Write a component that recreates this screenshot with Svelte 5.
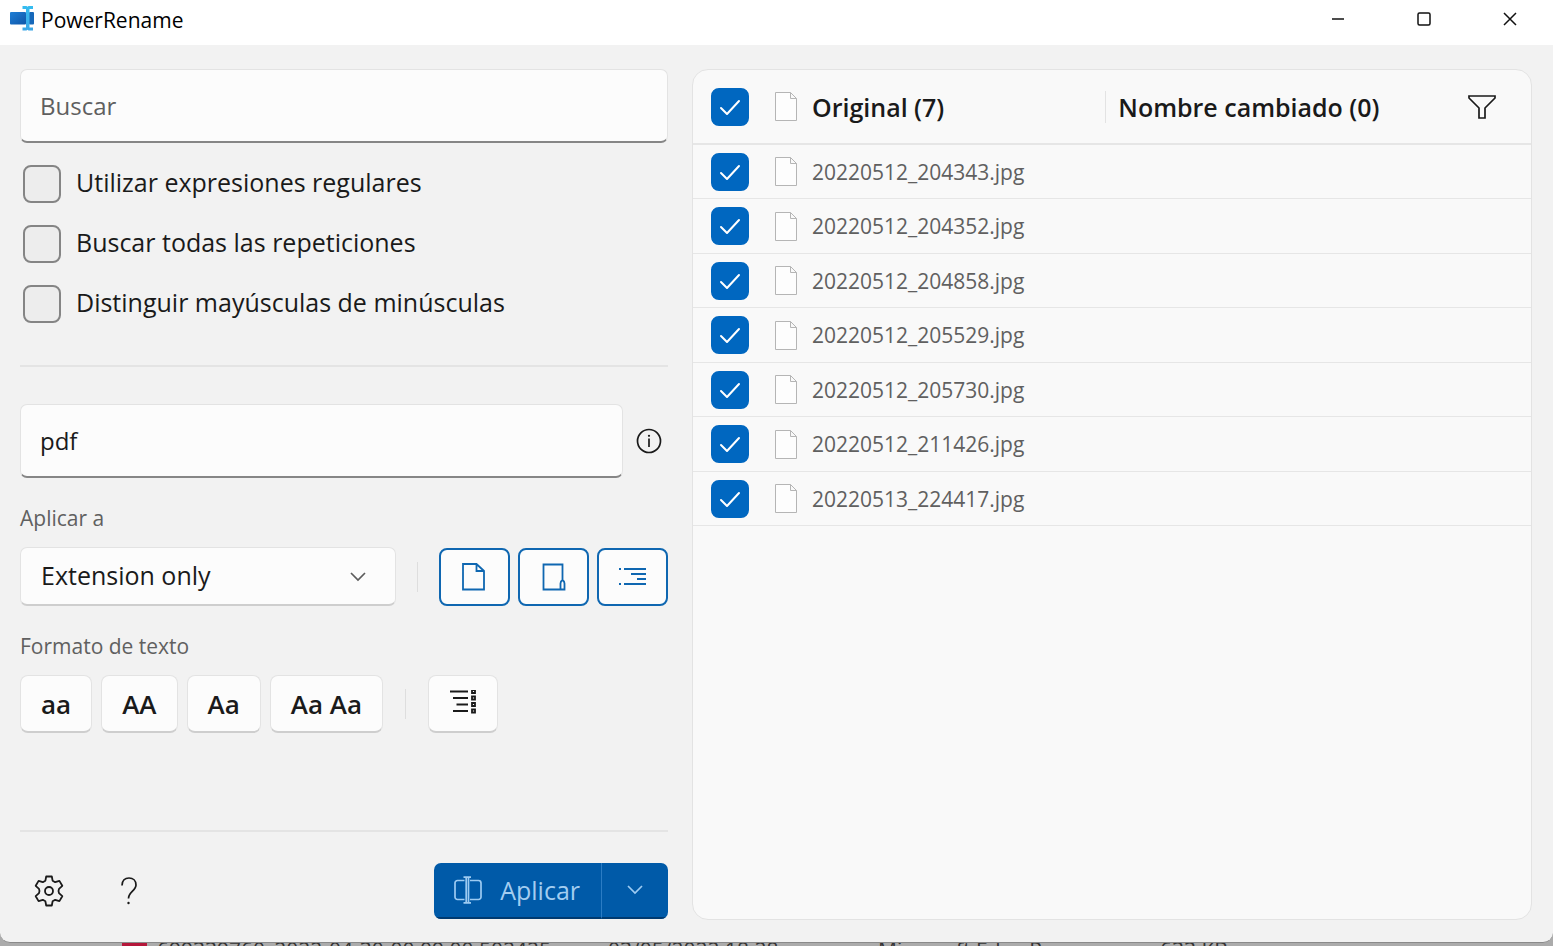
<script>
    let search = '';
    let replace = 'pdf';
    let applyTo = 'ext';

    let options = [
        { id: 'regex', label: 'Utilizar expresiones regulares', checked: false },
        { id: 'all', label: 'Buscar todas las repeticiones', checked: false },
        { id: 'case', label: 'Distinguir mayúsculas de minúsculas', checked: false }
    ];

    let include = { files: true, folders: true, subfolders: true };

    let files = [
        '20220512_204343.jpg',
        '20220512_204352.jpg',
        '20220512_204858.jpg',
        '20220512_205529.jpg',
        '20220512_205730.jpg',
        '20220512_211426.jpg',
        '20220513_224417.jpg'
    ].map((name) => ({ name, checked: true }));

    $: allChecked = files.every((f) => f.checked);

    function toggleAll(e) {
        const checked = e.target.checked;
        files = files.map((f) => ({ ...f, checked }));
    }
</script>

<div class="window">
    <header>
        <svg class="logo" width="26" height="26" viewBox="0 0 26 26">
            <defs>
                <linearGradient id="box" x1="0" y1="0" x2="1" y2="1">
                    <stop offset="0" stop-color="#1f7fd6" />
                    <stop offset="1" stop-color="#0f56a8" />
                </linearGradient>
                <linearGradient id="beam" x1="0" y1="0" x2="0" y2="1">
                    <stop offset="0" stop-color="#35bdf0" />
                    <stop offset="1" stop-color="#3ba6e6" />
                </linearGradient>
            </defs>
            <rect x="0" y="6" width="16" height="12.500" rx="1" fill="url(#box)" />
            <rect x="19" y="6" width="5" height="12.500" rx="1" fill="#1668ba" />
            <path d="M12.500 0h4l1 .8 1-.8h4.500v3h-3.500v18.500H23v3h-4.500l-1-.8-1 .8h-4v-3H16V3h-3.500z" fill="url(#beam)" />
        </svg>
        <h1>PowerRename</h1>
        <div class="controls">
            <button aria-label="Minimizar">
                <svg width="14" height="14" viewBox="0 0 14 14"><path d="M1 7h12" /></svg>
            </button>
            <button aria-label="Maximizar">
                <svg width="14" height="14" viewBox="0 0 14 14"><rect x="1" y="1" width="12" height="12" rx="1.500" /></svg>
            </button>
            <button aria-label="Cerrar">
                <svg width="14" height="14" viewBox="0 0 14 14"><path d="M1 1l12 12M13 1L1 13" /></svg>
            </button>
        </div>
    </header>

    <main>
        <section class="panel">
            <input class="text" type="text" placeholder="Buscar" aria-label="Buscar" bind:value={search} />

            <div class="options">
                {#each options as option}
                    <label>
                        <input type="checkbox" id={option.id} bind:checked={option.checked} />
                        <span>{option.label}</span>
                    </label>
                {/each}
            </div>

            <hr />

            <div class="replace">
                <input class="text" type="text" aria-label="Reemplazar con" bind:value={replace} />
                <button class="plain" aria-label="Información">
                    <svg width="26" height="26" viewBox="0 0 26 26" fill="none" stroke="#1a1a1a">
                        <circle cx="13" cy="13" r="11.500" stroke-width="1.700" />
                        <path d="M13 10.500V19" stroke-width="1.700" />
                        <circle cx="13" cy="7.800" r="1.100" fill="#1a1a1a" stroke="none" />
                    </svg>
                </button>
            </div>

            <label class="caption" for="apply-to">Aplicar a</label>
            <div class="row apply">
                <div class="select">
                    <select id="apply-to" bind:value={applyTo}>
                        <option value="both">Filename + extension</option>
                        <option value="name">Filename only</option>
                        <option value="ext">Extension only</option>
                    </select>
                    <svg width="16" height="10" viewBox="0 0 16 10"><path d="M1 1l7 7 7-7" /></svg>
                </div>
                <i class="sep"></i>
                <div class="toggles">
                    <button class:on={include.files} aria-pressed={include.files} aria-label="Incluir archivos" on:click={() => (include.files = !include.files)}>
                        <svg width="28" height="28" viewBox="0 0 28 28"><path d="M3 1h13.500L24 8v18.500H3zM16.500 1v7H24" /></svg>
                    </button>
                    <button class:on={include.folders} aria-pressed={include.folders} aria-label="Incluir carpetas" on:click={() => (include.folders = !include.folders)}>
                        <svg width="28" height="28" viewBox="0 0 28 28"><path d="M23.500 17V1.500H4.500V26.500H21M23.500 17c-1.500 1-2 2-2 3.500v6h4v-6c0-1.500-.5-2.500-2-3.500z" /></svg>
                    </button>
                    <button class:on={include.subfolders} aria-pressed={include.subfolders} aria-label="Incluir subcarpetas" on:click={() => (include.subfolders = !include.subfolders)}>
                        <svg width="28" height="28" viewBox="0 0 28 28"><path d="M1 6h2M6 6h22M13 11h15M19 16h9M1 21h2M6 21h22" /></svg>
                    </button>
                </div>
            </div>

            <p class="caption">Formato de texto</p>
            <div class="row format">
                <button>aa</button>
                <button>AA</button>
                <button>Aa</button>
                <button>Aa Aa</button>
                <i class="sep"></i>
                <button class="enum" aria-label="Enumerar elementos">
                    <svg width="28" height="28" viewBox="0 2 28 28" fill="none" stroke="#1a1a1a">
                        <path d="M1 3.500h18M4 10h15M7.500 16.500H19M4 23h15" stroke-width="1.800" />
                        <path d="M23 2h3v3h-3zM23 8.500h3v3h-3zM23 15h3v3h-3zM23 21.500h3v3h-3z" stroke-width="1.800" />
                    </svg>
                </button>
            </div>

            <footer>
                <button class="plain" aria-label="Configuración">
                    <svg width="32" height="32" viewBox="0 0 32 32" fill="none" stroke="#1a1a1a" stroke-width="1.800" stroke-linejoin="round">
                        <path d="M13.200 1.500h5.600l.8 4.200 2.600 1.500 4.200-1.300 2.900 4.900-3.300 3q-1 2.200 0 4.400l3.300 3-2.900 4.900-4.200-1.300-2.600 1.500-.8 4.200h-5.600l-.8-4.200-2.600-1.500-4.200 1.300-2.900-4.900 3.300-3q1-2.200 0-4.400l-3.300-3 2.900-4.900 4.200 1.300 2.600-1.500z" />
                        <circle cx="16" cy="16" r="4" />
                    </svg>
                </button>
                <button class="plain" aria-label="Ayuda">
                    <svg width="32" height="32" viewBox="0 0 32 32" fill="none" stroke="#1a1a1a" stroke-width="1.700">
                        <path d="M9 10.500C9 5.500 12 3 16 3s7 2.700 7 7c0 5.500-7.500 7-7.500 13.500" />
                        <circle cx="15.500" cy="28" r="1.200" fill="#1a1a1a" stroke="none" />
                    </svg>
                </button>
                <div class="split">
                    <button class="main">
                        <svg width="28" height="28" viewBox="0 0 28 28">
                            <path d="M10.500 4.500H3.500a2.500 2.500 0 0 0-2.500 2.500v14a2.500 2.500 0 0 0 2.500 2.500h7M16 4.500h8.500A2.500 2.500 0 0 1 27 7v14a2.500 2.500 0 0 1-2.500 2.500H16M9.500 1.200h7.500M9.500 26.800h7.500M12.200 1.200v25.600M14.500 1.200v25.600" />
                        </svg>
                        Aplicar
                    </button>
                    <button class="more" aria-label="Más opciones">
                        <svg width="16" height="10" viewBox="0 0 16 10"><path d="M1 1l7 7 7-7" /></svg>
                    </button>
                </div>
            </footer>
        </section>

        <section class="list">
            <table>
                <thead>
                    <tr>
                        <th class="check"><input type="checkbox" aria-label="Seleccionar todo" checked={allChecked} on:change={toggleAll} /></th>
                        <th class="icon">
                            <svg width="22" height="29" viewBox="0 0 22 29"><path d="M.5.500h15l6 6v22H.5zM15.500.500v6h6" /></svg>
                        </th>
                        <th class="name">Original (7)</th>
                        <th class="renamed">
                            <div>
                                <span>Nombre cambiado (0)</span>
                                <button class="plain" aria-label="Filtrar">
                                    <svg width="28" height="26" viewBox="0 0 28 26" fill="none" stroke="#1a1a1a" stroke-width="1.700">
                                        <path d="M1 2h26v2L17 14v10h-6V14L1 4z" />
                                    </svg>
                                </button>
                            </div>
                        </th>
                    </tr>
                </thead>
                <tbody>
                    {#each files as file}
                        <tr>
                            <td class="check"><input type="checkbox" aria-label={file.name} bind:checked={file.checked} /></td>
                            <td class="icon">
                                <svg width="22" height="29" viewBox="0 0 22 29"><path d="M.5.500h15l6 6v22H.5zM15.500.500v6h6" /></svg>
                            </td>
                            <td class="name">{file.name}</td>
                            <td></td>
                        </tr>
                    {/each}
                </tbody>
            </table>
        </section>
    </main>
</div>

<!-- top of the explorer row showing under the window -->
<div class="behind">
    <b></b>
    <span>699339760_2022-04-30-00 09 00 502425</span>
    <span>03/05/2022 18:28</span>
    <span>Microsoft Edge P...</span>
    <span>633 KB</span>
</div>

<style>
    :global(body) {
        background: #ababab;
    }

    :global(#app) {
        display: flex;
        flex-direction: column;
        height: 100vh;
        overflow: hidden;
        font-family: "Open Sans", "Noto Sans", sans-serif;
        color: #1a1a1a;
    }

    .window {
        flex: 1;
        min-height: 0;
        display: flex;
        flex-direction: column;
        background: #f2f2f2;
        border-bottom: 1px solid #8a8a8a;
        border-radius: 0 0 10px 10px;
    }

    button,
    input,
    select {
        font: inherit;
        color: inherit;
        box-sizing: border-box;
        margin: 0;
    }

    button {
        display: flex;
        align-items: center;
        justify-content: center;
        padding: 0;
    }

    svg {
        display: block;
        flex: none;
    }

    header {
        display: flex;
        align-items: center;
        height: 45px;
        padding: 0 0 8px 10px;
        box-sizing: border-box;
        background: #fff;
    }

    h1 {
        margin: 0 auto 0 5px;
        padding-top: 2px;
        font-size: 21px;
        line-height: 28px;
        font-weight: 400;
        color: #000;
    }

    .controls {
        display: flex;
    }

    .controls button {
        width: 86px;
        height: 36px;
        border: none;
        background: transparent;
    }

    .controls svg {
        fill: none;
        stroke: #111;
        stroke-width: 1.5;
    }

    main {
        flex: 1;
        min-height: 0;
        display: grid;
        grid-template-columns: 648fr 840fr;
        gap: 24px;
        padding: 24px 21px 22px 20px;
    }

    .panel {
        display: flex;
        flex-direction: column;
        min-width: 0;
    }

    .text {
        width: 100%;
        height: 74px;
        padding: 0 19px;
        border: 1px solid #e3e3e3;
        border-bottom: 2px solid #868686;
        border-radius: 7px;
        background: #fcfcfc;
        font-size: 24px;
        outline: none;
    }

    .text::placeholder {
        color: #5f5f5f;
        opacity: 1;
    }

    .options {
        padding: 11px 0 0 3px;
    }

    .options label {
        display: flex;
        align-items: center;
        gap: 15px;
        height: 60px;
        font-size: 25px;
    }

    .options span {
        padding-bottom: 5px;
    }

    input[type='checkbox'] {
        display: block;
        appearance: none;
        width: 38px;
        height: 38px;
        border: 2px solid #858585;
        border-radius: 8px;
        background: #ededed;
    }

    input[type='checkbox']:checked {
        border-color: #0067c0;
        background: #0067c0 url("data:image/svg+xml,%3Csvg xmlns='http://www.w3.org/2000/svg' viewBox='0 0 34 34'%3E%3Cpath d='M8 18l6 6L26 11' fill='none' stroke='white' stroke-width='2' stroke-linecap='round' stroke-linejoin='round'/%3E%3C/svg%3E") center / 34px;
    }

    hr {
        width: 100%;
        margin: 31px 0 37px;
        border: none;
        border-top: 2px solid #e4e4e4;
    }

    .replace {
        display: flex;
        align-items: center;
        gap: 13px;
        padding-right: 6px;
    }

    .plain {
        border: none;
        background: transparent;
    }

    .caption {
        margin: 0;
        padding: 24px 0 13px;
        font-size: 21px;
        line-height: 32px;
        color: #606060;
    }

    .row {
        display: flex;
        align-items: center;
    }

    .sep {
        width: 1px;
        height: 30px;
        background: #dedede;
    }

    .apply {
        justify-content: space-between;
    }

    .select {
        display: grid;
        align-items: center;
        width: 58%;
    }

    .select select,
    .select svg {
        grid-area: 1 / 1;
    }

    .select svg {
        justify-self: end;
        margin-right: 30px;
        fill: none;
        stroke: #5c5c5c;
        stroke-width: 1.7;
        pointer-events: none;
    }

    select {
        appearance: none;
        height: 59px;
        padding: 0 50px 3px 20px;
        border: 1px solid #e3e3e3;
        border-bottom: 2px solid #cecece;
        border-radius: 7px;
        background: #fcfcfc;
        font-size: 25px;
    }

    .toggles {
        display: flex;
        gap: 8px;
    }

    .toggles button {
        width: 71px;
        height: 58px;
        border: 2px solid #d5d5d5;
        border-radius: 8px;
        background: #fcfcfc;
    }

    .toggles .on {
        border-color: #0f67b1;
    }

    .toggles svg {
        fill: none;
        stroke: #0f67b1;
        stroke-width: 1.8;
    }

    .format {
        gap: 9px;
    }

    .format button {
        height: 58px;
        padding: 0 20px;
        border: 1px solid #e3e3e3;
        border-bottom: 2px solid #cecece;
        border-radius: 8px;
        background: #fcfcfc;
        font-size: 26px;
        font-weight: 600;
    }

    .format .sep {
        margin: 0 13px;
    }

    footer {
        display: flex;
        align-items: center;
        margin-top: auto;
        padding: 31px 0 1px 13px;
        border-top: 2px solid #e4e4e4;
    }

    footer .plain {
        margin-right: 48px;
    }

    .split {
        display: flex;
        height: 56px;
        margin-left: auto;
        border-radius: 7px;
        overflow: hidden;
        background: #005aa8;
        color: #a3cdf0;
    }

    .split button {
        border: none;
        border-bottom: 2px solid #003a70;
        background: transparent;
        font-size: 25px;
    }

    .split svg {
        fill: none;
        stroke: #9dcbf2;
        stroke-width: 1.7;
    }

    .split .main {
        gap: 18px;
        padding: 0 21px 0 20px;
    }

    .split .more {
        width: 67px;
        border-left: 1px solid #2b7cc4;
    }

    .list {
        min-width: 0;
        border: 1px solid #e3e3e3;
        border-radius: 16px;
        background: #f9f9f9;
        overflow: hidden;
    }

    table {
        width: 100%;
        table-layout: fixed;
        border-collapse: separate;
        border-spacing: 0;
    }

    th,
    td {
        box-sizing: border-box;
        padding: 0;
        text-align: left;
        border-bottom: 1px solid #e6e6e6;
    }

    th {
        height: 75px;
        border-bottom-width: 2px;
        font-size: 25px;
        font-weight: 600;
    }

    td {
        height: 54px;
        font-size: 21px;
        color: #606060;
    }

    tr:nth-child(even) td {
        height: 55px;
    }

    .check {
        width: 82px;
        padding-left: 18px;
    }

    .icon {
        width: 37px;
    }

    .icon path {
        fill: #fdfdfd;
        stroke: #b5b5b5;
    }

    .name {
        width: 35%;
    }

    .renamed div {
        display: flex;
        align-items: center;
        justify-content: space-between;
        height: 32px;
        padding: 0 35px 0 12px;
        border-left: 1px solid #e3e3e3;
    }

    .behind {
        display: grid;
        grid-template-columns: 25px 1fr 260px 272px 393px;
        column-gap: 10px;
        height: 3px;
        padding-left: 122px;
        overflow: hidden;
        font-size: 21px;
        line-height: 14px;
        white-space: nowrap;
        color: #333;
    }

    .behind b {
        background: #b5173a;
    }
</style>
